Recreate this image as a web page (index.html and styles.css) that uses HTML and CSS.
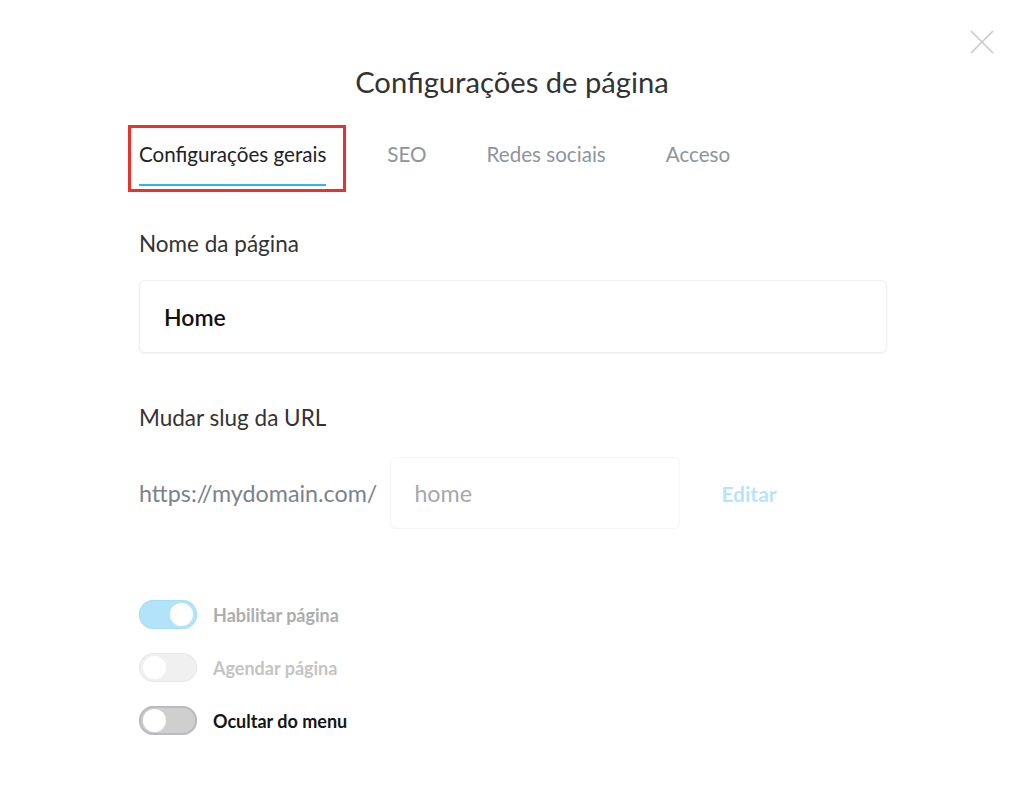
FILE: index.html
```html
<!DOCTYPE html>
<html lang="pt">
<head>
<meta charset="utf-8">
<title>Configurações de página</title>
<link rel="stylesheet" href="styles.css">
</head>
<body>
<div class="modal">
  <button class="close" aria-label="Fechar">
    <svg width="24" height="24" viewBox="0 0 24 24"><path d="M1 1L23 23M23 1L1 23" stroke="#c8c8c8" stroke-width="1.6" fill="none"/></svg>
  </button>
  <h1 class="title">Configurações de página</h1>
  <nav class="tabs">
    <div class="tab active"><span>Configurações gerais</span></div>
    <div class="tab">SEO</div>
    <div class="tab">Redes sociais</div>
    <div class="tab">Acceso</div>
  </nav>
  <section class="field">
    <label class="label">Nome da página</label>
    <div class="input big"><span class="value">Home</span></div>
  </section>
  <section class="field slug">
    <label class="label">Mudar slug da URL</label>
    <div class="slug-row">
      <span class="domain">https://mydomain.com/</span>
      <div class="input small"><span class="placeholder">home</span></div>
      <span class="edit">Editar</span>
    </div>
  </section>
  <section class="toggles">
    <div class="toggle-row">
      <span class="switch on"><span class="knob"></span></span>
      <span class="tlabel muted">Habilitar página</span>
    </div>
    <div class="toggle-row">
      <span class="switch disabled"><span class="knob"></span></span>
      <span class="tlabel muted2">Agendar página</span>
    </div>
    <div class="toggle-row">
      <span class="switch off"><span class="knob"></span></span>
      <span class="tlabel dark">Ocultar do menu</span>
    </div>
  </section>
</div>
</body>
</html>
```
FILE: styles.css
```css
* { box-sizing: border-box; }
html, body { margin: 0; padding: 0; background: #fff; }
body { width: 1024px; height: 799px; overflow: hidden; font-family: "Source Sans Pro", Lato, "Noto Sans", sans-serif; }
.modal { position: relative; padding: 62px 137px 0 139px; }
.close { position: absolute; top: 30px; right: 30px; background: none; border: 0; padding: 0; width: 24px; height: 24px; }
.title { margin: 0; text-align: center; font-weight: 400; font-size: 29.2px; line-height: 40px; color: #333; padding-right: 2px; }
.tabs { display: flex; gap: 60px; margin-top: 37px; font-size: 20.6px; color: #8e949b; }
.tab { line-height: 30px; }
.tab.active { color: #222; position: relative; margin-right: 1px; }
.tab.active span { display: inline-block; border-bottom: 2px solid #2fb5f0; padding-bottom: 15px; }
.tab.active::before { content: ""; position: absolute; left: -11px; right: -20px; top: -14px; bottom: -6px; border: 3px solid #e8332d; }
.field { margin-top: 43px; }
.label { display: block; font-size: 22.5px; color: #333; line-height: 30px; }
.input { border: 1px solid #efefef; border-radius: 6px; box-shadow: 0 1px 3px rgba(0,0,0,0.05); background: #fff; display: flex; align-items: center; }
.input.big { height: 73px; margin-top: 21px; padding-left: 24px; width: 748px; }
.value { font-size: 23px; font-weight: 600; color: #111; }
.slug { margin-top: 50px; }
.slug-row { display: flex; align-items: center; margin-top: 24px; }
.domain { font-size: 23.3px; color: #7c828a; }
.input.small { width: 290px; height: 72px; margin-left: 13px; padding-left: 23px; border-color: #f5f5f5; box-shadow: none; }
.placeholder { font-size: 23.3px; color: #a8a8a8; }
.edit { margin-left: 41px; font-size: 21px; font-weight: 700; color: #b7e4fa; }
.toggles { margin-top: 71px; display: flex; flex-direction: column; gap: 24px; }
.toggle-row { display: flex; align-items: center; height: 29px; }
.switch { position: relative; width: 58px; height: 29px; border-radius: 15px; display: inline-block; }
.knob { position: absolute; top: 3px; width: 23px; height: 23px; border-radius: 50%; background: #fff; }
.switch.on { background: #b3e3fb; box-shadow: inset 0 0 0 1px #a9dcf5; }
.switch.on .knob { right: 4px; }
.switch.disabled { background: #f0f0f0; box-shadow: inset 0 0 0 1px #e8e8e8; }
.switch.disabled .knob { left: 4px; }
.switch.off { background: #cfcfcf; box-shadow: inset 0 0 0 2px #b8bcc0; }
.switch.off .knob { left: 4px; }
.tlabel { margin-left: 16px; font-family: Lato, sans-serif; font-weight: 700; font-size: 18px; }
.muted { color: #adadad; }
.muted2 { color: #c4c4c4; }
.dark { color: #151515; }
```
